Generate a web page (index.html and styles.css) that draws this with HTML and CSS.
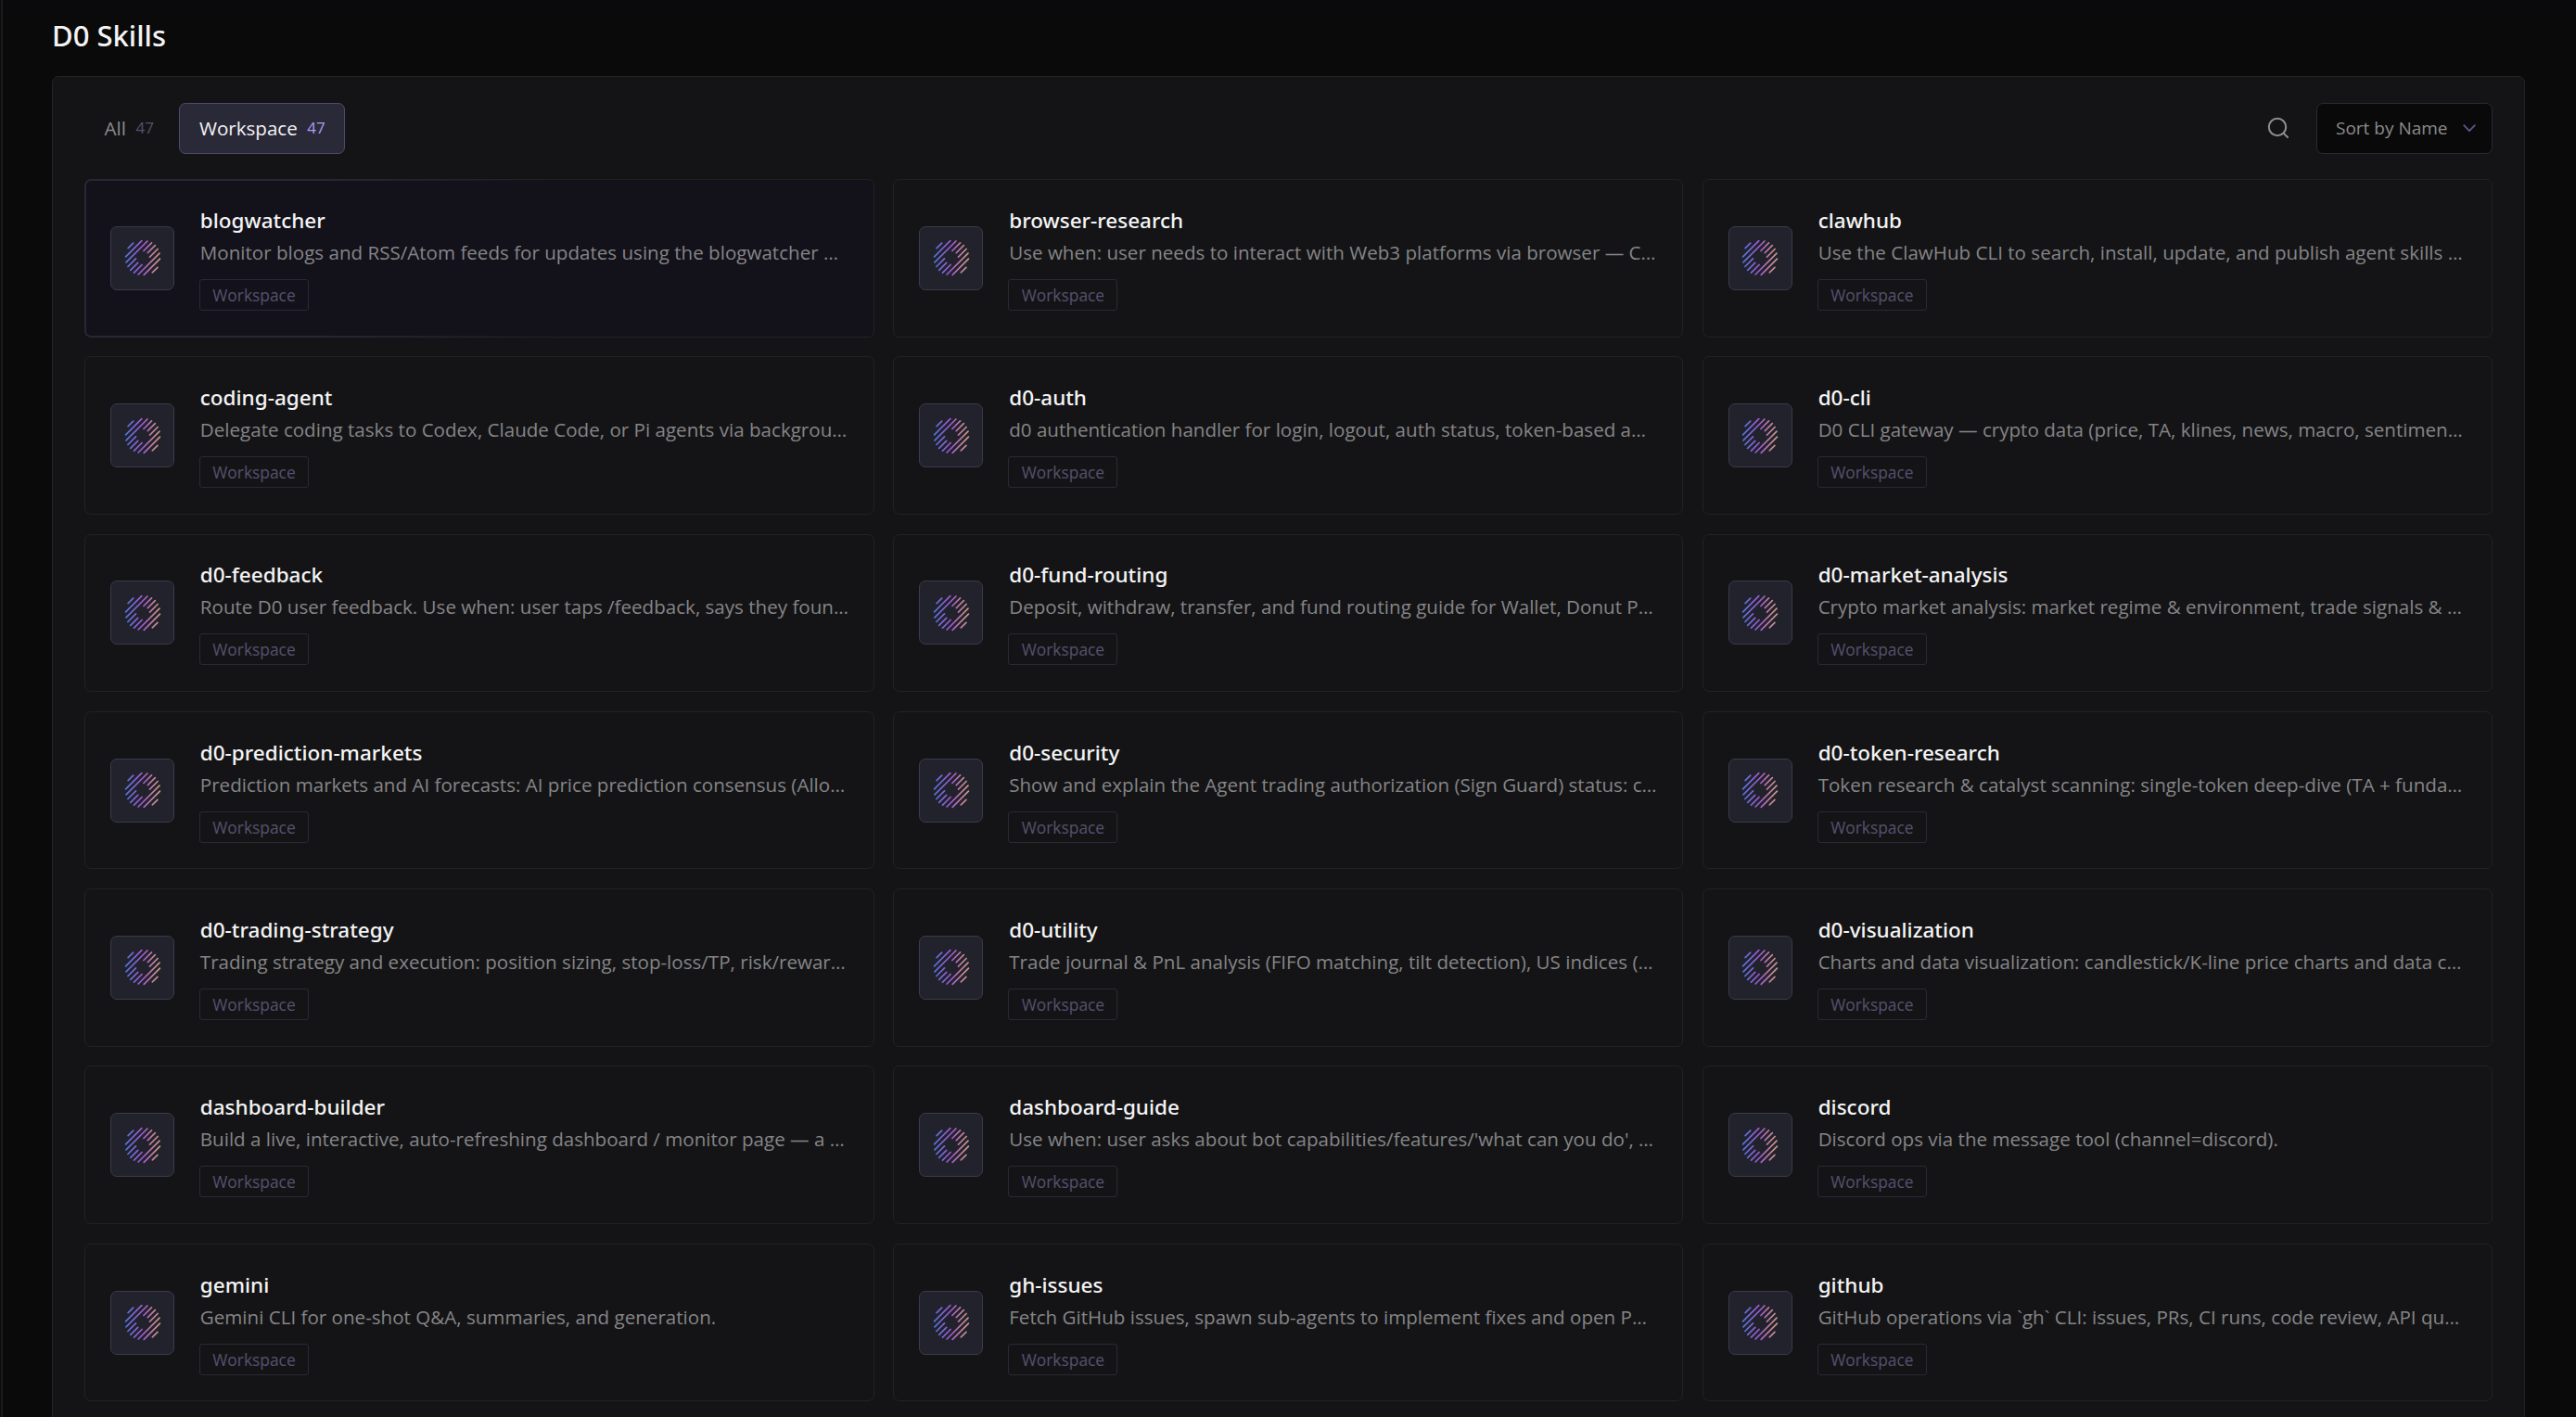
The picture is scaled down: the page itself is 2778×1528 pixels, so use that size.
FILE: index.html
```html
<!DOCTYPE html>
<html lang="en">
<head>
    <meta charset="UTF-8">
    <meta name="viewport" content="width=device-width, initial-scale=1.0">
    <title>D0 Skills</title>
    <link rel="stylesheet" href="styles.css">
</head>
<body>
    <svg class="defs" width="0" height="0">
        <defs>
            <linearGradient id="logo-grad" gradientUnits="userSpaceOnUse" x1="-19" y1="0" x2="19" y2="0">
                <stop offset="0" stop-color="#4f74dc"/>
                <stop offset="0.5" stop-color="#a259d0"/>
                <stop offset="0.75" stop-color="#bb7c9c"/>
                <stop offset="1" stop-color="#c99a84"/>
            </linearGradient>
            <symbol id="logo" viewBox="-20 -20 40 40">
                <path fill="none" stroke="url(#logo-grad)" stroke-width="1.7" stroke-linecap="round" d="M-15.9-10.3L-10.3-15.9M-18.4-1.2L-1.2-18.4M-18 4.9L4.9-18M-16.1 9.5L-7.5 .9M.9-7.5L9.5-16.1M-13.3 13.3L-5.3 5.3M5.3-5.3L13.3-13.3M-9.5 16.1L-.9 7.5M7.5-.9L16.1-9.5M-4.9 18L18-4.9M1.2 18.4L18.4 1.2M10.3 15.9L15.9 10.3"/>
            </symbol>
        </defs>
    </svg>
    <div class="page">
        <h1>D0 Skills</h1>
        <div class="panel">
            <div class="toolbar">
                <button class="tab">All <span class="count">47</span></button>
                <button class="tab active">Workspace <span class="count">47</span></button>
                <button class="search-btn">
                    <svg width="24" height="24" viewBox="0 0 24 24" fill="none" stroke="#8f8f92" stroke-width="2" stroke-linecap="round"><circle cx="11" cy="11" r="9.2"/><path d="M17.6 17.6L22 22"/></svg>
                </button>
                <button class="sort">
                    <span>Sort by Name</span>
                    <svg width="14" height="9" viewBox="0 0 14 9" fill="none" stroke="#5d568c" stroke-width="1.8" stroke-linecap="round" stroke-linejoin="round"><path d="M1.2 1.2L7 7.2L12.8 1.2"/></svg>
                </button>
            </div>
            <div class="grid" id="grid"></div>
        </div>
    </div>
    <script>
        var skills = [
            ["blogwatcher", "Monitor blogs and RSS/Atom feeds for updates using the blogwatcher …"],
            ["browser-research", "Use when: user needs to interact with Web3 platforms via browser — C…"],
            ["clawhub", "Use the ClawHub CLI to search, install, update, and publish agent skills …"],
            ["coding-agent", "Delegate coding tasks to Codex, Claude Code, or Pi agents via backgrou…"],
            ["d0-auth", "d0 authentication handler for login, logout, auth status, token-based a…"],
            ["d0-cli", "D0 CLI gateway — crypto data (price, TA, klines, news, macro, sentimen…"],
            ["d0-feedback", "Route D0 user feedback. Use when: user taps /feedback, says they foun…"],
            ["d0-fund-routing", "Deposit, withdraw, transfer, and fund routing guide for Wallet, Donut P…"],
            ["d0-market-analysis", "Crypto market analysis: market regime & environment, trade signals & …"],
            ["d0-prediction-markets", "Prediction markets and AI forecasts: AI price prediction consensus (Allo…"],
            ["d0-security", "Show and explain the Agent trading authorization (Sign Guard) status: c…"],
            ["d0-token-research", "Token research & catalyst scanning: single-token deep-dive (TA + funda…"],
            ["d0-trading-strategy", "Trading strategy and execution: position sizing, stop-loss/TP, risk/rewar…"],
            ["d0-utility", "Trade journal & PnL analysis (FIFO matching, tilt detection), US indices (…"],
            ["d0-visualization", "Charts and data visualization: candlestick/K-line price charts and data c…"],
            ["dashboard-builder", "Build a live, interactive, auto-refreshing dashboard / monitor page — a …"],
            ["dashboard-guide", "Use when: user asks about bot capabilities/features/'what can you do', …"],
            ["discord", "Discord ops via the message tool (channel=discord)."],
            ["gemini", "Gemini CLI for one-shot Q&A, summaries, and generation."],
            ["gh-issues", "Fetch GitHub issues, spawn sub-agents to implement fixes and open P…"],
            ["github", "GitHub operations via `gh` CLI: issues, PRs, CI runs, code review, API qu…"]
        ];
        var grid = document.getElementById("grid");
        skills.forEach(function(skill, i){
            var card = document.createElement("div");
            card.className = i == 0 ? "card selected" : "card";
            card.innerHTML = '<div class="tile"><svg class="logo"><use href="#logo"/></svg></div>' +
                '<div class="info"><div class="name"></div><div class="desc"></div><span class="tag">Workspace</span></div>';
            card.querySelector(".name").textContent = skill[0];
            card.querySelector(".desc").textContent = skill[1];
            grid.appendChild(card);
        });
    </script>
</body>
</html>
```

FILE: styles.css
```css
* {
    box-sizing: border-box;
    margin: 0;
}
html, body {
    height: 100%;
    overflow: hidden;
}
body {
    background: #0a0a0a;
    background-image: linear-gradient(#0a0a0d 14px, transparent 14px);
    font-family: "Open Sans", "Noto Sans", sans-serif;
    color: #f4f4f5;
}
.defs {
    position: absolute;
}
.page {
    height: 100%;
    margin-left: 1px;
    padding: 0 55px 0 53px;
    border-left: 2px solid #1b1b1c;
}
h1, .name {
    font-family: "Noto Sans", "Open Sans", sans-serif;
    font-weight: 500;
}
h1 {
    height: 82px;
    padding-top: 16px;
    font-size: 31px;
    line-height: 44px;
}
.panel {
    height: 1500px;
    padding: 28px 34.5px 28px 34px;
    background: #141416;
    border: 1px solid #232325;
    border-radius: 7px;
}
.toolbar {
    display: flex;
    align-items: center;
    height: 55px;
    margin-bottom: 27px;
}
button {
    font-family: inherit;
    background: none;
    border: 1px solid transparent;
    border-radius: 7px;
    height: 55px;
    display: flex;
    align-items: center;
}
.tab {
    padding: 0 20.5px 1px;
    margin-right: 6px;
    font-size: 20.6px;
    color: #8b8b8d;
}
.tab .count {
    margin-left: 10.5px;
    padding-bottom: 2px;
    font-size: 17px;
    color: #56516f;
}
.tab.active {
    color: #f4f4f5;
    background: #2a2938;
    border-color: #4f4a6c;
}
.tab.active .count {
    color: #a79ef0;
}
.search-btn {
    margin-left: auto;
    margin-right: 22px;
    padding-bottom: 2px;
}
.sort {
    width: 190px;
    padding: 0 17px 1px 20.5px;
    justify-content: space-between;
    font-size: 19px;
    color: #8b8b8d;
    background: #09090a;
    border-color: #2a2933;
}
.grid {
    display: grid;
    grid-template-columns: repeat(3, 1fr);
    grid-auto-rows: 170.5px;
    gap: 20.8px;
}
.card {
    display: flex;
    align-items: center;
    padding: 0 27px;
    border: 1px solid #222224;
    border-radius: 7px;
    min-width: 0;
}
.card.selected {
    position: relative;
    background: #13111a;
}
/* brighter edge that fades out towards the right */
.card.selected::after {
    content: "";
    position: absolute;
    inset: -1px;
    border: 2px solid #282735;
    border-radius: 7px;
    mask-image: linear-gradient(to right, #000 30%, transparent 60%);
}
.tile {
    width: 69px;
    height: 69px;
    flex: none;
    display: flex;
    align-items: center;
    justify-content: center;
    background: #22222c;
    border: 1px solid #3b3a4b;
    border-radius: 7px;
}
.logo {
    width: 40px;
    height: 40px;
}
.info {
    margin-left: 27px;
    padding-bottom: 1px;
    min-width: 0;
}
.name, .desc {
    padding-left: 0.8px;
    line-height: 34px;
    white-space: nowrap;
}
.name {
    font-size: 22.5px;
}
.desc {
    font-size: 20.58px;
    color: #858587;
}
.tag {
    display: block;
    width: 118px;
    height: 34px;
    margin-top: 12px;
    border: 1px solid #2a2935;
    border-radius: 3px;
    text-align: center;
    font-size: 17.4px;
    line-height: 32px;
    color: #56516f;
}
```
